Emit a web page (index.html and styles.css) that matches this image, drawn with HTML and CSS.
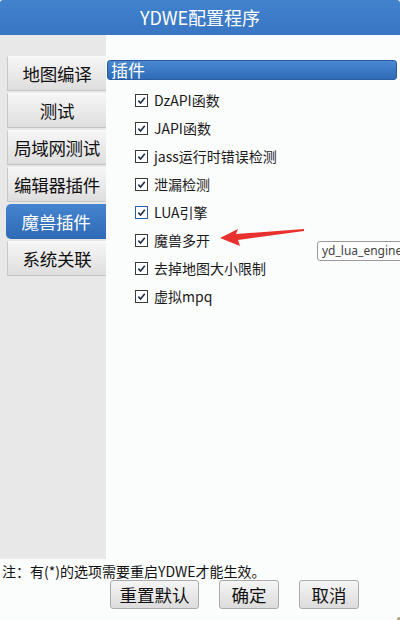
FILE: index.html
```html
<!DOCTYPE html>
<html lang="zh-CN">
<head>
<meta charset="utf-8">
<title>YDWE配置程序</title>
<link rel="stylesheet" href="styles.css">
</head>
<body>
<div class="window">
  <div class="titlebar">YDWE配置程序</div>
  <div class="main">
    <div class="sidebar">
      <div class="tab">地图编译</div>
      <div class="tab">测试</div>
      <div class="tab">局域网测试</div>
      <div class="tab">编辑器插件</div>
      <div class="tab active">魔兽插件</div>
      <div class="tab">系统关联</div>
    </div>
    <div class="content">
      <div class="group-head">插件</div>
      <div class="options">
        <label class="opt"><span class="cb"><svg viewBox="0 0 13 13"><path d="M2.8 6.6 L5.4 9.4 L10.4 3.2"/></svg></span>DzAPI函数</label>
        <label class="opt"><span class="cb"><svg viewBox="0 0 13 13"><path d="M2.8 6.6 L5.4 9.4 L10.4 3.2"/></svg></span>JAPI函数</label>
        <label class="opt"><span class="cb"><svg viewBox="0 0 13 13"><path d="M2.8 6.6 L5.4 9.4 L10.4 3.2"/></svg></span>jass运行时错误检测</label>
        <label class="opt"><span class="cb"><svg viewBox="0 0 13 13"><path d="M2.8 6.6 L5.4 9.4 L10.4 3.2"/></svg></span>泄漏检测</label>
        <label class="opt"><span class="cb focus"><svg viewBox="0 0 13 13"><path d="M2.8 6.6 L5.4 9.4 L10.4 3.2"/></svg></span>LUA引擎</label>
        <label class="opt"><span class="cb"><svg viewBox="0 0 13 13"><path d="M2.8 6.6 L5.4 9.4 L10.4 3.2"/></svg></span>魔兽多开</label>
        <label class="opt"><span class="cb"><svg viewBox="0 0 13 13"><path d="M2.8 6.6 L5.4 9.4 L10.4 3.2"/></svg></span>去掉地图大小限制</label>
        <label class="opt"><span class="cb"><svg viewBox="0 0 13 13"><path d="M2.8 6.6 L5.4 9.4 L10.4 3.2"/></svg></span>虚拟mpq</label>
      </div>
    </div>
  </div>
  <div class="footer">
    <div class="note">注：有(*)的选项需要重启YDWE才能生效。</div>
    <div class="buttons">
      <button class="btn wide">重置默认</button>
      <button class="btn">确定</button>
      <button class="btn">取消</button>
    </div>
  </div>
  <svg class="arrow" viewBox="0 0 90 22" width="90" height="22">
    <polygon points="2,13 20,4 18,9 86,4 86,6 20,15 22,21" />
  </svg>
  <div class="tooltip">yd_lua_engine</div>
  <div class="grip"></div>
</div>
</body>
</html>
```

FILE: styles.css
```css
* { box-sizing: border-box; }
html, body {
  margin: 0;
  padding: 0;
  background: #fbfcfc;
}
body {
  font-family: "Noto Sans CJK SC", "Noto Sans", sans-serif;
  color: #111;
}
.window {
  position: relative;
  width: 400px;
  height: 620px;
  overflow: hidden;
  display: flex;
  flex-direction: column;
  background: #fbfcfc;
}
.titlebar {
  height: 35px;
  flex: none;
  background: linear-gradient(#4282cd, #3875c3);
  color: #fff;
  font-size: 18px;
  line-height: 35px;
  text-align: center;
  border-radius: 3px 3px 0 0;
}
.main {
  display: flex;
  height: 524px;
  flex: none;
}
.sidebar {
  width: 106px;
  flex: none;
  background: #e8e8e8;
  padding: 21px 0 0 7px;
  display: flex;
  flex-direction: column;
  gap: 2px;
}
.tab {
  height: 35px;
  background: linear-gradient(#f6f6f6, #dedede);
  border-left: 1px solid #c8c8c8;
  border-top: 1px solid #fafafa;
  border-bottom: 1px solid #c4c4c4;
  font-size: 17.5px;
  line-height: 33px;
  text-align: center;
  color: #111;
  white-space: nowrap;
  letter-spacing: -0.3px;
}
.tab.active {
  background: linear-gradient(#4584d0, #2f6ab5);
  border: none;
  border-radius: 5px 0 0 5px;
  color: #fff;
  line-height: 35px;
  margin-left: -1px;
}
.content {
  flex: 1;
  padding: 25px 3px 0 1px;
}
.group-head {
  height: 20px;
  background: linear-gradient(#4a88d2, #2f6bb8);
  border: 1px solid #2a5c9e;
  border-radius: 3px;
  color: #fff;
  font-size: 17px;
  line-height: 18px;
  padding-left: 3px;
}
.options {
  padding: 6px 0 0 28px;
  display: flex;
  flex-direction: column;
}
.opt {
  height: 28px;
  display: flex;
  align-items: center;
  font-size: 14px;
  color: #1a1a1a;
}
.cb {
  width: 13px;
  height: 13px;
  border: 1px solid #3a3a3a;
  background: #fff;
  margin-right: 6px;
  display: flex;
}
.cb.focus {
  border-color: #2c5fa8;
  border-width: 1.5px;
}
.cb svg {
  width: 100%;
  height: 100%;
}
.cb path {
  fill: none;
  stroke: #1d2f4a;
  stroke-width: 1.9;
}
.footer {
  flex: 1;
  padding-top: 3px;
}
.note {
  font-size: 14px;
  line-height: 18px;
  padding-left: 2px;
  color: #111;
  white-space: nowrap;
}
.buttons {
  display: flex;
  gap: 20px;
  margin: 0 0 0 110px;
}
.btn {
  font-family: "Noto Sans CJK SC", "Noto Sans", sans-serif;
  height: 29px;
  width: 60px;
  padding: 0;
  background: linear-gradient(#f5f5f5, #dcdcdc);
  border: 1px solid #ababab;
  border-radius: 3px;
  font-size: 17.5px;
  line-height: 26px;
  color: #111;
}
.btn.wide { width: 89px; }
.arrow {
  position: absolute;
  left: 218px;
  top: 225px;
}
.arrow polygon { fill: #e8302e; }
.tooltip {
  position: absolute;
  left: 317px;
  top: 241px;
  width: 100px;
  height: 20px;
  border: 1px solid #9a9a9a;
  border-radius: 3px;
  background: #fdfdfd;
  font-family: "Noto Sans", sans-serif;
  font-size: 12px;
  line-height: 17px;
  padding-left: 4px;
  color: #444;
  white-space: nowrap;
}
.grip {
  position: absolute;
  right: 0;
  bottom: 0;
  width: 3px;
  height: 3px;
  background: #b8a888;
  border-radius: 2px 0 0 0;
}
```
